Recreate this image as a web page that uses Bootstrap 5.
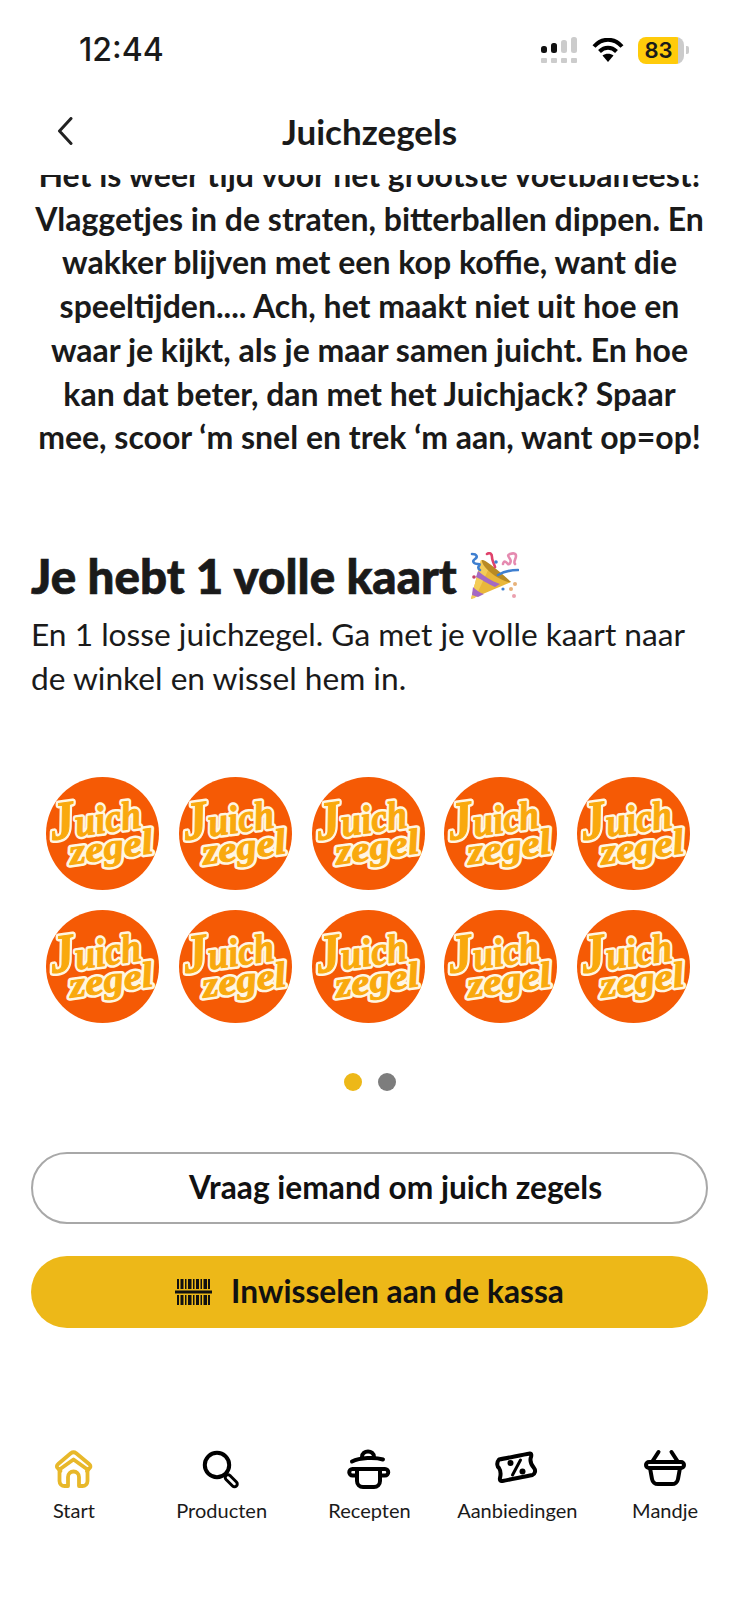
<!DOCTYPE html>
<html lang="nl">
  <head>
    <meta charset="UTF-8" />
    <meta name="viewport" content="width=device-width, initial-scale=1.0" />
    <title>Juichzegels</title>
    <link
      href="https://cdn.jsdelivr.net/npm/bootstrap@5.3.0/dist/css/bootstrap.min.css"
      rel="stylesheet"
    />
    <style>
      body {
        font-family: "Lato", "Liberation Sans", sans-serif;
        color: #1a1a1a;
        background: #fff;
        height: 1600px;
        overflow: hidden;
      }
      .status-row {
        height: 90px;
        padding: 10px 50px 0 79px;
      }
      .status-time {
        font-family: "Inter", "Liberation Sans", sans-serif;
        font-size: 32px;
        font-weight: 500;
      }
      .status-signal {
        margin-right: 14px;
      }
      .status-wifi {
        margin-right: 14px;
      }
      .battery-pack {
        width: 46px;
        height: 27px;
        border-radius: 8px;
        background: linear-gradient(to right, #ffcb0a 87%, #cbcbcb 87%);
        font-family: "Inter", "Liberation Sans", sans-serif;
        font-size: 22px;
        font-weight: 600;
        padding-right: 5px;
      }
      .battery-nub {
        width: 3px;
        height: 8px;
        margin-left: 2px;
        background: #cbcbcb;
        border-radius: 0 2px 2px 0;
      }
      .head-row {
        height: 85px;
        padding: 0 57px 4px;
      }
      .head-title {
        font-size: 35px;
        font-weight: 700;
        margin: 0;
      }
      .head-back {
        left: 57px;
        top: 27px;
      }
      .intro-clip {
        height: 285px;
        overflow: hidden;
      }
      .intro-text {
        margin: -22px 0 0;
        font-size: 32px;
        font-weight: 700;
        line-height: 43.7px;
      }
      .main-pad {
        padding: 0 31px;
      }
      .full-title {
        margin: 86px 0 6px;
        font-size: 47.5px;
        font-weight: 900;
        line-height: 60px;
        gap: 12px;
        -webkit-text-stroke: 0.7px #1a1a1a;
      }
      .full-text {
        margin: 0;
        font-size: 31.7px;
        line-height: 44px;
      }
      .sticker-grid {
        margin-top: 77px;
        padding: 0 18px 0 15px;
        row-gap: 20px;
      }
      .sticker-img {
        width: 113px;
        height: 113px;
      }
      .sticker-words {
        font-family: "Liberation Serif", serif;
        font-weight: 700;
        font-style: italic;
      }
      .pager-row {
        margin-top: 50px;
        gap: 16px;
      }
      .pager-dot {
        width: 18px;
        height: 18px;
        background: #7d7d7d;
      }
      .pager-dot.is-on {
        background: #edb818;
      }
      .pill-btn {
        height: 72px;
        font-size: 31.7px;
        font-weight: 700;
        color: #111;
        gap: 19px;
      }
      .pill-white {
        margin-top: 61px;
        border: 2px solid #a8a8a8;
        background: #fff;
      }
      .pill-yellow {
        margin-top: 32px;
        border: 0;
        background: #edb818;
      }
      .pill-spacer {
        width: 33px;
      }
      .tab-row {
        margin-top: 122px;
      }
      .tab-link {
        padding: 0;
        color: #1a1a1a;
        font-size: 20px;
        line-height: 28px;
      }
      .tab-icon {
        height: 38px;
        margin-bottom: 8px;
      }
      .tab-icon svg {
        display: block;
        margin: 0 auto;
        overflow: visible;
      }
    </style>
  </head>
  <body>
    <!-- one sticker, reused below -->
    <svg width="0" height="0" class="d-block">
      <defs>
        <g id="sticker-text" class="sticker-words">
          <text x="6" y="56" font-size="40" textLength="91" lengthAdjust="spacingAndGlyphs"><tspan font-size="54">J</tspan>uich</text>
          <text x="21" y="83" font-size="36" textLength="84" lengthAdjust="spacingAndGlyphs">zegel</text>
        </g>
      </defs>
      <symbol id="sticker" viewBox="0 0 113 113">
        <circle cx="56.5" cy="56.5" r="56.5" fill="#f55a05" />
        <g transform="rotate(-8 56 56)" stroke-linejoin="round">
          <use href="#sticker-text" fill="#fff6e2" stroke="#fff6e2" stroke-width="6" />
          <use href="#sticker-text" fill="#f9a90d" stroke="#f9a90d" stroke-width="1" />
        </g>
      </symbol>
    </svg>

    <!-- Status bar -->
    <div class="status-row d-flex align-items-center justify-content-between">
      <span class="status-time">12:44</span>
      <div class="d-flex align-items-center">
        <svg width="37" height="27" viewBox="0 0 37 27" class="status-signal">
          <rect x="0" y="9" width="6" height="7" rx="2.5" fill="#111" />
          <rect x="10" y="6" width="6" height="10" rx="2.5" fill="#111" />
          <rect x="20" y="3" width="6" height="13" rx="2.5" fill="#ccc" />
          <rect x="30" y="0" width="6" height="16" rx="2.5" fill="#ccc" />
          <g fill="#ccc">
            <rect x="0" y="21" width="6" height="5" rx="1" />
            <rect x="10" y="21" width="6" height="5" rx="1" />
            <rect x="20" y="21" width="6" height="5" rx="1" />
            <rect x="30" y="21" width="6" height="5" rx="1" />
          </g>
        </svg>
        <svg width="32" height="24" viewBox="0 0 32 24" class="status-wifi">
          <g fill="none" stroke="#000" stroke-width="4">
            <path d="M2 8.5C10-.5 22-.5 30 8.5" />
            <path d="M7.5 13.5c5-5 12-5 17 0" />
          </g>
          <path d="M10.5 17.5c3-2.5 8-2.5 11 0L16 24z" fill="#000" />
        </svg>
        <div class="battery-pack d-flex align-items-center justify-content-center">83</div>
        <div class="battery-nub"></div>
      </div>
    </div>

    <!-- Header -->
    <div class="head-row position-relative d-flex align-items-center justify-content-center">
      <svg class="head-back position-absolute" width="16" height="28" viewBox="0 0 16 28">
        <path d="M14 1.5 2.5 14 14 26.5" fill="none" stroke="#222" stroke-width="3" stroke-linecap="round" stroke-linejoin="round" />
      </svg>
      <h1 class="head-title">Juichzegels</h1>
    </div>

    <!-- Intro, scrolled under the header -->
    <div class="intro-clip">
      <p class="intro-text text-center">
        Het is weer tijd voor het grootste voetbalfeest!<br />
        Vlaggetjes in de straten, bitterballen dippen. En<br />
        wakker blijven met een kop koffie, want die<br />
        speeltijden.... Ach, het maakt niet uit hoe en<br />
        waar je kijkt, als je maar samen juicht. En hoe<br />
        kan dat beter, dan met het Juichjack? Spaar<br />
        mee, scoor ‘m snel en trek ‘m aan, want op=op!
      </p>
    </div>

    <div class="main-pad">
      <h2 class="full-title d-flex align-items-center">
        Je hebt 1 volle kaart
        <svg width="50" height="48" viewBox="0 0 50 48">
          <path d="M2 47 12 8l30 22z" fill="#e9b73a" />
          <path d="M2 47 12 8l9 6L6 46z" fill="#f3cc58" />
          <path d="M9 19c6 5 13 10 22 13l-5 3C19 32 12 27 7 25zM4 35c3 3 7 6 11 7l-6 3-6-2z" fill="#a469c4" />
          <path d="M13 8c2-1 12 6 29 22-4 1-14-4-21-10-5-4-9-10-8-12z" fill="#b88a24" />
          <g fill="none" stroke-width="2.6" stroke-linecap="round">
            <path d="M3 2c5 0 6 3 3 5s-2 5 3 5-3 3 2 6" stroke="#3f7fd0" />
            <path d="M18 2c3-2 5 0 5 3s2 7 3 10" stroke="#e0426b" />
            <path d="M34 12c1-5 4-1 5 0s4-2 2-5-3-4 0-5 6-1 6 2-3 6-1 8" stroke="#e58ab0" />
            <path d="M29 23c5-3 11-5 20-5" stroke="#3f7fd0" />
          </g>
          <g>
            <circle cx="27" cy="10" r="1.8" fill="#3f7fd0" />
            <circle cx="5" cy="25" r="1.8" fill="#c4416a" />
            <circle cx="46" cy="32" r="2" fill="#e7b27a" />
            <circle cx="42" cy="37" r="2" fill="#e7b27a" />
            <circle cx="45" cy="44" r="2" fill="#eba0ae" />
            <circle cx="34" cy="37" r="1.6" fill="#3f7fd0" />
          </g>
        </svg>
      </h2>
      <p class="full-text">
        En 1 losse juichzegel. Ga met je volle kaart naar<br />
        de winkel en wissel hem in.
      </p>

      <div class="sticker-grid d-flex flex-wrap justify-content-between">
        <svg class="sticker-img"><use href="#sticker" /></svg>
        <svg class="sticker-img"><use href="#sticker" /></svg>
        <svg class="sticker-img"><use href="#sticker" /></svg>
        <svg class="sticker-img"><use href="#sticker" /></svg>
        <svg class="sticker-img"><use href="#sticker" /></svg>
        <svg class="sticker-img"><use href="#sticker" /></svg>
        <svg class="sticker-img"><use href="#sticker" /></svg>
        <svg class="sticker-img"><use href="#sticker" /></svg>
        <svg class="sticker-img"><use href="#sticker" /></svg>
        <svg class="sticker-img"><use href="#sticker" /></svg>
      </div>

      <div class="pager-row d-flex justify-content-center">
        <span class="pager-dot is-on rounded-circle"></span>
        <span class="pager-dot rounded-circle"></span>
      </div>

      <button type="button" class="btn pill-btn pill-white rounded-pill w-100 d-flex align-items-center justify-content-center">
        <span class="pill-spacer"></span>
        Vraag iemand om juich zegels
      </button>
      <button type="button" class="btn pill-btn pill-yellow rounded-pill w-100 d-flex align-items-center justify-content-center">
        <svg width="37" height="26" viewBox="0 0 37 26">
          <rect x="0" y="11.5" width="37" height="3" fill="#111" />
          <g fill="#111">
            <rect x="2" y="0" width="2" height="10" />
            <rect x="5.500" y="0" width="3" height="10" />
            <rect x="10" y="0" width="1.500" height="10" />
            <rect x="13" y="0" width="3.500" height="10" />
            <rect x="18" y="0" width="1.500" height="10" />
            <rect x="21" y="0" width="3" height="10" />
            <rect x="25.500" y="0" width="1.500" height="10" />
            <rect x="28.500" y="0" width="3.500" height="10" />
            <rect x="33" y="0" width="2" height="10" />
            <rect x="2" y="16" width="2" height="10" />
            <rect x="5.500" y="16" width="3" height="10" />
            <rect x="10" y="16" width="1.500" height="10" />
            <rect x="13" y="16" width="3.500" height="10" />
            <rect x="18" y="16" width="1.500" height="10" />
            <rect x="21" y="16" width="3" height="10" />
            <rect x="25.500" y="16" width="1.500" height="10" />
            <rect x="28.500" y="16" width="3.500" height="10" />
            <rect x="33" y="16" width="2" height="10" />
          </g>
        </svg>
        Inwisselen aan de kassa
      </button>
    </div>

    <!-- Tab bar -->
    <nav class="tab-row nav nav-justified">
      <a class="nav-link tab-link" href="#">
        <div class="tab-icon">
          <svg width="39" height="38" viewBox="0 0 39 38" fill="none" stroke="#e8b82a" stroke-width="3.800" stroke-linecap="round" stroke-linejoin="round">
            <path d="M6.500 21 3.600 18a2.500 2.500 0 0 1 .3-3.800L16.800 3.300a4.500 4.500 0 0 1 5.400 0l13.200 10.900a2.500 2.500 0 0 1 .3 3.800L33 21" />
            <path d="M5.500 19.500 19.500 9.500l14 10" />
            <path d="M5.500 19v12a5 5 0 0 0 5 5H14v-9a5.500 5.500 0 0 1 11 0v9h3.500a5 5 0 0 0 5-5V19" />
          </svg>
        </div>
        Start
      </a>
      <a class="nav-link tab-link" href="#">
        <div class="tab-icon">
          <svg width="38" height="38" viewBox="0 0 38 38" fill="none" stroke-linecap="round">
            <circle cx="14" cy="15" r="12.200" stroke="#000" stroke-width="4" />
            <path d="M25 27.500 31.500 34" stroke="#000" stroke-width="8.500" />
            <path d="M25 27.500 31.500 34" stroke="#fff" stroke-width="2.500" />
          </svg>
        </div>
        Producten
      </a>
      <a class="nav-link tab-link" href="#">
        <div class="tab-icon">
          <svg width="44" height="38" viewBox="0 1 44 38" fill="none" stroke="#000" stroke-width="4" stroke-linecap="round" stroke-linejoin="round">
            <path d="M15 8c0-7.500 12-7.500 12 0" />
            <path d="M5 12.500C13 8.500 28 8 36 10.500" />
            <path d="M10 20h23v12a6 6 0 0 1-6 6H16a6 6 0 0 1-6-6z" />
            <path d="M10 20H5.500a3.200 3.200 0 0 0 0 6.500H10M33 20h5a3.200 3.200 0 0 1 0 6.500h-5" />
          </svg>
        </div>
        Recepten
      </a>
      <a class="nav-link tab-link" href="#">
        <div class="tab-icon">
          <svg width="46" height="36" viewBox="0 0 46 36" fill="none" stroke="#000" stroke-width="4" stroke-linecap="round" stroke-linejoin="round">
            <path d="M5 9.500C14 8 27 5 36 3.500c1.500 0 1.500 2 1 3.500-1.500 4 .5 8 3 11 2 2.500 1 6-1.500 7-9 2-21 4-30 6-2 .5-3-1-2.500-3 1-4 1-7-1-10C3.500 17 2 13 5 9.500z" />
            <path d="M26.500 10 18.500 25" stroke-width="3" />
            <circle cx="16.500" cy="13" r="3" fill="#000" stroke="none" />
            <circle cx="28.500" cy="21.500" r="3" fill="#000" stroke="none" />
          </svg>
        </div>
        Aanbiedingen
      </a>
      <a class="nav-link tab-link" href="#">
        <div class="tab-icon">
          <svg width="42" height="38" viewBox="0 0 42 38" fill="none" stroke="#000" stroke-width="4" stroke-linecap="round" stroke-linejoin="round">
            <path d="M14.500 2 8 12M27.500 2 34 12" />
            <rect x="2" y="12" width="38" height="6" rx="3" />
            <path d="M6 18l2 11a6 6 0 0 0 6 5h14a6 6 0 0 0 6-5l2-11" />
          </svg>
        </div>
        Mandje
      </a>
    </nav>

    <script src="https://cdn.jsdelivr.net/npm/bootstrap@5.3.0/dist/js/bootstrap.bundle.min.js"></script>
  </body>
</html>
